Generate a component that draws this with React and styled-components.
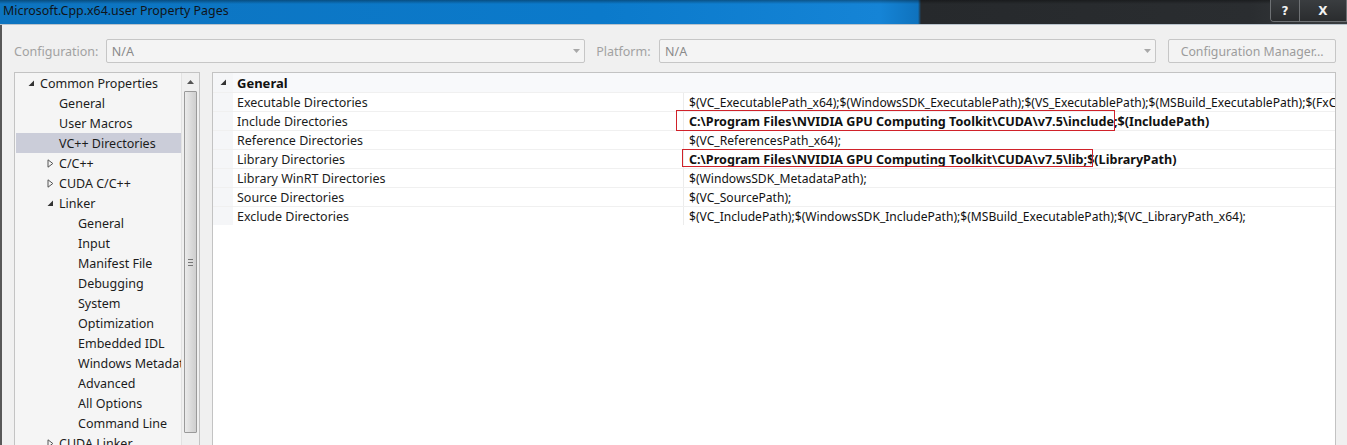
import React from 'react'
import styled, { createGlobalStyle } from 'styled-components'

const GlobalStyle = createGlobalStyle`
  html, body { margin: 0; padding: 0; }
  body {
    background: #f0f0f0;
    font-family: "Noto Sans", "Open Sans", sans-serif;
    overflow: hidden;
  }
`

const tree = [
  { label: 'Common Properties', level: 0, arrow: 'open' },
  { label: 'General', level: 1 },
  { label: 'User Macros', level: 1 },
  { label: 'VC++ Directories', level: 1, selected: true },
  { label: 'C/C++', level: 1, arrow: 'closed' },
  { label: 'CUDA C/C++', level: 1, arrow: 'closed' },
  { label: 'Linker', level: 1, arrow: 'open' },
  { label: 'General', level: 2 },
  { label: 'Input', level: 2 },
  { label: 'Manifest File', level: 2 },
  { label: 'Debugging', level: 2 },
  { label: 'System', level: 2 },
  { label: 'Optimization', level: 2 },
  { label: 'Embedded IDL', level: 2 },
  { label: 'Windows Metadata', level: 2 },
  { label: 'Advanced', level: 2 },
  { label: 'All Options', level: 2 },
  { label: 'Command Line', level: 2 },
  { label: 'CUDA Linker', level: 1, arrow: 'closed' },
]

const props = [
  { name: 'Executable Directories', value: '$(VC_ExecutablePath_x64);$(WindowsSDK_ExecutablePath);$(VS_ExecutablePath);$(MSBuild_ExecutablePath);$(FxCopDir);$(PATH);' },
  { name: 'Include Directories', value: 'C:\\Program Files\\NVIDIA GPU Computing Toolkit\\CUDA\\v7.5\\include;$(IncludePath)', bold: true },
  { name: 'Reference Directories', value: '$(VC_ReferencesPath_x64);' },
  { name: 'Library Directories', value: 'C:\\Program Files\\NVIDIA GPU Computing Toolkit\\CUDA\\v7.5\\lib;$(LibraryPath)', bold: true },
  { name: 'Library WinRT Directories', value: '$(WindowsSDK_MetadataPath);' },
  { name: 'Source Directories', value: '$(VC_SourcePath);' },
  { name: 'Exclude Directories', value: '$(VC_IncludePath);$(WindowsSDK_IncludePath);$(MSBuild_ExecutablePath);$(VC_LibraryPath_x64);' },
]

function OpenArrow() {
  return (
    <svg width="7" height="7" viewBox="0 0 7 7">
      <path d="M6 0.5 L6 6 L0.5 6 Z" fill="#333" />
    </svg>
  )
}

function ClosedArrow() {
  return (
    <svg width="7" height="9" viewBox="0 0 7 9">
      <path d="M1 0.8 L5.8 4.5 L1 8.2 Z" fill="none" stroke="#555" strokeWidth="1" />
    </svg>
  )
}

function DropArrow() {
  return (
    <svg width="7" height="4" viewBox="0 0 7 4">
      <path d="M0 0 L7 0 L3.5 4 Z" fill="#a8a8a8" />
    </svg>
  )
}

function App() {
  return (
    <>
      <GlobalStyle />
      <Window>
        <TitleBar>
          <Title>Microsoft.Cpp.x64.user Property Pages</Title>
          <Caption>
            <CaptionButton $w={28}>?</CaptionButton>
            <CaptionButton $w={46}>X</CaptionButton>
          </Caption>
        </TitleBar>
        <Frame>
          <ConfigRow>
            <Label>Configuration:</Label>
            <Select $w={480}>
              <span>N/A</span>
              <DropArrow />
            </Select>
            <Label $ml={11}>Platform:</Label>
            <Select $w={498}>
              <span>N/A</span>
              <DropArrow />
            </Select>
            <Button>Configuration Manager...</Button>
          </ConfigRow>
          <Main>
            <TreePanel>
              <TreeList>
                {tree.map((t, i) => (
                  <TreeRow key={i} $selected={t.selected}>
                    <TreeInner $level={t.level}>
                      <ArrowBox>
                        {t.arrow === 'open' && <OpenArrow />}
                        {t.arrow === 'closed' && <ClosedArrow />}
                      </ArrowBox>
                      <TreeText>{t.label}</TreeText>
                    </TreeInner>
                  </TreeRow>
                ))}
              </TreeList>
              <ScrollBar>
                <ScrollArrow>
                  <svg width="7" height="4" viewBox="0 0 7 4">
                    <path d="M0 4 L7 4 L3.5 0 Z" fill="#555" />
                  </svg>
                </ScrollArrow>
                <Thumb>
                  <Grip />
                </Thumb>
              </ScrollBar>
            </TreePanel>
            <GridPanel>
              <GroupRow>
                <Margin>
                  <OpenArrow />
                </Margin>
                <GroupTitle>General</GroupTitle>
              </GroupRow>
              {props.map((p, i) => (
                <PropRow key={i}>
                  <Margin />
                  <NameCell>{p.name}</NameCell>
                  <ValueCell $bold={p.bold}>{p.value}</ValueCell>
                </PropRow>
              ))}
              <RedBox $left={463} $top={37} $w={439} $h={21} />
              <RedBox $left={469} $top={76} $w={411} $h={18} />
            </GridPanel>
          </Main>
        </Frame>
      </Window>
    </>
  )
}

export default App

const Window = styled.div`
  width: 1347px;
  height: 445px;
  display: flex;
  flex-direction: column;
  overflow: hidden;
`

const TitleBar = styled.div`
  height: 24px;
  flex-shrink: 0;
  display: flex;
  align-items: flex-start;
  justify-content: space-between;
  background:
    linear-gradient(to bottom, rgba(0,0,0,0.35) 0, rgba(0,0,0,0) 4px),
    linear-gradient(to right, #0d74c0 0, #0b7acb 600px, #1584d6 880px, #0f72bd 918px, #26292c 921px, #2a2d30 1250px, #3a3d40 100%);
  border-bottom: 1px solid #b9c3cc;
`

const Title = styled.div`
  font-size: 12.4px;
  line-height: 22px;
  color: #101418;
  padding-left: 3px;
  white-space: nowrap;
`

const Caption = styled.div`
  display: flex;
  height: 21px;
  border: 1px solid #6e7174;
  border-top: none;
  border-radius: 0 0 0 4px;
  overflow: hidden;
`

const CaptionButton = styled.div`
  width: ${p => p.$w}px;
  display: flex;
  align-items: center;
  justify-content: center;
  color: #f2f2f2;
  font-family: "DejaVu Sans", sans-serif;
  font-weight: bold;
  font-size: 12px;
  background: linear-gradient(to bottom, #3a3d40, #2a2c2e);
  & + & {
    border-left: 1px solid #6e7174;
  }
`

const Frame = styled.div`
  flex: 1;
  display: flex;
  flex-direction: column;
  border-left: 2px solid #585858;
  padding: 14px 11px 0 12px;
  min-height: 0;
`

const ConfigRow = styled.div`
  display: flex;
  align-items: center;
  height: 24px;
  flex-shrink: 0;
`

const Label = styled.div`
  font-size: 12.5px;
  color: #a2a2a2;
  margin-left: ${p => p.$ml || 0}px;
  width: ${p => (p.$ml ? 63 : 92)}px;
  white-space: nowrap;
`

const Select = styled.div`
  width: ${p => p.$w}px;
  height: 24px;
  box-sizing: border-box;
  border: 1px solid #c6c6c6;
  border-radius: 2px;
  background: #f4f4f4;
  display: flex;
  align-items: center;
  justify-content: space-between;
  padding: 0 4px 0 5px;
  font-size: 12.5px;
  color: #8a8a8a;
`

const Button = styled.div`
  margin-left: 12px;
  width: 168px;
  height: 24px;
  box-sizing: border-box;
  border: 1px solid #c6c6c6;
  border-radius: 2px;
  background: #f3f3f3;
  display: flex;
  align-items: center;
  justify-content: center;
  font-size: 12.3px;
  color: #9c9c9c;
  white-space: nowrap;
`

const Main = styled.div`
  flex: 1;
  display: flex;
  gap: 12px;
  margin-top: 9px;
  min-height: 0;
`

const TreePanel = styled.div`
  width: 186px;
  flex-shrink: 0;
  box-sizing: border-box;
  border: 1px solid #c3c3c3;
  border-bottom: none;
  background: #f5f5f5;
  display: flex;
  overflow: hidden;
`

const TreeList = styled.div`
  flex: 1;
  min-width: 0;
  overflow: hidden;
  padding-left: 1px;
`

const TreeRow = styled.div`
  height: 20px;
  display: flex;
  align-items: center;
  background: ${p => (p.$selected ? '#cbcdd9' : 'transparent')};
  overflow: hidden;
`

const TreeInner = styled.div`
  display: flex;
  align-items: center;
  padding-left: ${p => 9 + p.$level * 19}px;
`

const ArrowBox = styled.span`
  width: 15px;
  flex-shrink: 0;
  display: flex;
  align-items: center;
  justify-content: flex-start;
  padding-left: 3px;
  box-sizing: border-box;
`

const TreeText = styled.span`
  font-size: 12.5px;
  color: #1c1c1c;
  white-space: nowrap;
`

const ScrollBar = styled.div`
  width: 17px;
  flex-shrink: 0;
  display: flex;
  flex-direction: column;
  align-items: center;
  background: #f0f0f0;
  border-left: 1px solid #e2e2e2;
`

const ScrollArrow = styled.div`
  height: 18px;
  display: flex;
  align-items: center;
  justify-content: center;
`

const Thumb = styled.div`
  width: 13px;
  height: 342px;
  box-sizing: border-box;
  border: 1px solid #9a9a9a;
  border-radius: 1px;
  background: linear-gradient(to right, #ebebeb, #d9d9d9 60%, #cfcfcf);
  display: flex;
  justify-content: center;
  padding-top: 167px;
`

const Grip = styled.div`
  width: 5px;
  height: 5px;
  border-top: 1px solid #777;
  border-bottom: 1px solid #777;
  position: relative;
  &::after {
    content: '';
    position: absolute;
    left: 0;
    right: 0;
    top: 2px;
    border-top: 1px solid #777;
  }
`

const GridPanel = styled.div`
  flex: 1;
  position: relative;
  box-sizing: border-box;
  border: 1px solid #c3c3c3;
  border-bottom: none;
  background: #ffffff;
  overflow: hidden;
`

const GroupRow = styled.div`
  height: 19px;
  display: flex;
  align-items: center;
  background: #f8f9fb;
`

const Margin = styled.div`
  width: 20px;
  height: 100%;
  flex-shrink: 0;
  background: #f5f6f8;
  display: flex;
  align-items: center;
  justify-content: center;
`

const GroupTitle = styled.div`
  font-size: 13px;
  font-weight: bold;
  color: #111;
  padding-left: 4px;
`

const PropRow = styled.div`
  height: 19px;
  display: flex;
  align-items: center;
  box-sizing: border-box;
  border-top: 1px solid #f0f0f0;
`

const NameCell = styled.div`
  width: 451px;
  flex-shrink: 0;
  height: 100%;
  display: flex;
  align-items: center;
  box-sizing: border-box;
  padding-left: 4px;
  border-right: 1px solid #ececec;
  font-size: 12.5px;
  color: #1c1c1c;
  white-space: nowrap;
`

const ValueCell = styled.div`
  flex: 1;
  min-width: 0;
  padding-left: 5px;
  font-size: ${p => (p.$bold ? '12.6px' : '12.1px')};
  font-weight: ${p => (p.$bold ? 'bold' : 'normal')};
  color: #111;
  white-space: nowrap;
  overflow: hidden;
`

const RedBox = styled.div`
  position: absolute;
  left: ${p => p.$left}px;
  top: ${p => p.$top}px;
  width: ${p => p.$w}px;
  height: ${p => p.$h}px;
  box-sizing: border-box;
  border: 1px solid #d0222a;
  pointer-events: none;
`
